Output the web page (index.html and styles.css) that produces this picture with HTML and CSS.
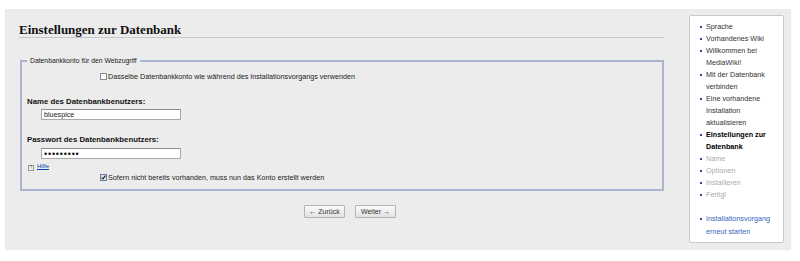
FILE: index.html
```html
<!DOCTYPE html>
<html>

<head>
  <meta charset="utf-8">
  <link rel="stylesheet" href="styles.css">
</head>

<body>
  <div class="page">
<!-- main form -->
    <div class="main">
      <h2 class="title">Einstellungen zur Datenbank</h2>
      <fieldset class="box">
        <legend>Datenbankkonto für den Webzugriff</legend>
        <label class="check-row"><span class="cb"></span>Dasselbe Datenbankkonto wie während des Installationsvorgangs verwenden</label>
        <div class="field-label">Name des Datenbankbenutzers:</div>
        <input class="field-input" type="text" value="bluespice">
        <div class="field-label">Passwort des Datenbankbenutzers:</div>
        <input class="field-input pass" type="password" value="geheim123">
        <div class="help"><span class="help-icon">?</span><a href="#">Hilfe</a></div>
        <label class="check-row last"><span class="cb checked"><svg viewBox="0 0 5 5" width="5" height="5"><path d="M0.7 2.5 L2 3.9 L4.4 0.6" fill="none" stroke="#1d1d1d" stroke-width="1.1"/></svg></span>Sofern nicht bereits vorhanden, muss nun das Konto erstellt werden</label>
      </fieldset>
      <div class="nav">
        <button class="nav-btn">← Zurück</button>
        <button class="nav-btn">Weiter →</button>
      </div>
    </div>
<!-- steps -->
    <div class="side">
      <ul class="steps">
        <li class="done">Sprache</li>
        <li class="done">Vorhandenes Wiki</li>
        <li class="done">Willkommen bei MediaWiki!</li>
        <li class="done">Mit der Datenbank verbinden</li>
        <li class="done">Eine vorhandene Installation aktualisieren</li>
        <li class="current">Einstellungen zur Datenbank</li>
        <li class="todo">Name</li>
        <li class="todo">Optionen</li>
        <li class="todo">Installieren</li>
        <li class="todo">Fertig!</li>
      </ul>
      <ul class="steps restart">
        <li><a href="#">Installationsvorgang erneut starten</a></li>
      </ul>
    </div>
  </div>
</body>

</html>
```

FILE: styles.css
```css
body {
  margin: 0;
  background-color: #fff;
  font-family: "Liberation Sans", Arial, sans-serif;
  font-size: 7.2px;
  color: #222;
}

.page {
  display: flex;
  gap: 25px;
  margin: 9px 9px 0 5px;
  padding: 6px 7px 7px 14px;
  height: 241px;
  box-sizing: border-box;
  background-color: #ececec;
}

.main {
  flex: 1;
  min-width: 0;
}

.title {
  margin: 7px 0 0;
  font: bold 13px/15px "Liberation Serif", Georgia, serif;
  color: #111;
  border-bottom: 1px solid #c8c8c8;
}

.box {
  margin: 19px 0 0 1px;
  padding: 7px 6px 6px 5px;
  border: 2px solid #a9b5cd;
  min-width: 0;
}

.box legend {
  padding: 0 3px;
  font-size: 6.8px;
  line-height: 8px;
}

.check-row {
  display: block;
  padding-left: 73px;
  line-height: 10px;
}

.check-row.last {
  margin-top: 2px;
}

.cb {
  display: inline-block;
  width: 7px;
  height: 7px;
  box-sizing: border-box;
  margin-right: 1px;
  border: 1px solid #8c8c8c;
  background-color: #fff;
  vertical-align: -1px;
}

.cb svg {
  display: block;
}

.cb.checked {
  background-color: #dde6f3;
  border-color: #6f7e96;
}

.field-label {
  margin-top: 15px;
  line-height: 10px;
  font-weight: bold;
  font-size: 7.8px;
  color: #111;
}

.field-input {
  display: block;
  margin: 2px 0 0 14px;
  width: 140px;
  height: 11px;
  box-sizing: border-box;
  padding: 0 2px;
  border: 1px solid #a8a8a8;
  border-top-color: #8e8e8e;
  background-color: #fff;
  font-family: "Liberation Sans", Arial, sans-serif;
  font-size: 7.2px;
  color: #222;
  outline: none;
}

.field-input.pass {
  margin-top: 3px;
  font-size: 9px;
  letter-spacing: 0.8px;
  color: #111;
}

.help {
  margin-top: 3px;
  padding-left: 1px;
  line-height: 8px;
  font-size: 6px;
}

.help-icon {
  display: inline-block;
  width: 6px;
  height: 6px;
  box-sizing: border-box;
  border: 1px solid #9a9a9a;
  background-color: #f4f4f4;
  font-size: 4.5px;
  line-height: 4px;
  text-align: center;
  color: #555;
  vertical-align: -1px;
}

.help a {
  margin-left: 3px;
  color: #0645ad;
  text-decoration: underline;
}

.nav {
  display: flex;
  gap: 10px;
  margin-top: 14px;
  padding-left: 285px;
}

.nav-btn {
  width: 41px;
  height: 13px;
  padding: 0;
  border: 1px solid #b3b3b3;
  border-radius: 1px;
  background: linear-gradient(#fafafa, #e2e2e2);
  font-family: "Liberation Sans", Arial, sans-serif;
  font-size: 7px;
  color: #333;
  cursor: pointer;
}

.side {
  width: 95px;
  box-sizing: border-box;
  padding: 5px 1px 0 16px;
  border: 1px solid #c9c9c9;
  border-radius: 2px;
  background-color: #fff;
}

.steps {
  list-style: none;
  margin: 0;
  padding: 0;
  line-height: 12px;
}

.steps li::before {
  content: "";
  display: inline-block;
  width: 2px;
  height: 2px;
  margin-left: -6px;
  margin-right: 4px;
  background-color: #2a4b8d;
  vertical-align: middle;
}

.done {
  color: #333;
}

.current {
  font-weight: bold;
  color: #000;
}

.todo {
  color: #aaa;
}

.restart {
  margin-top: 11px;
  line-height: 13px;
}

.restart a {
  color: #3366bb;
  text-decoration: none;
}
```
